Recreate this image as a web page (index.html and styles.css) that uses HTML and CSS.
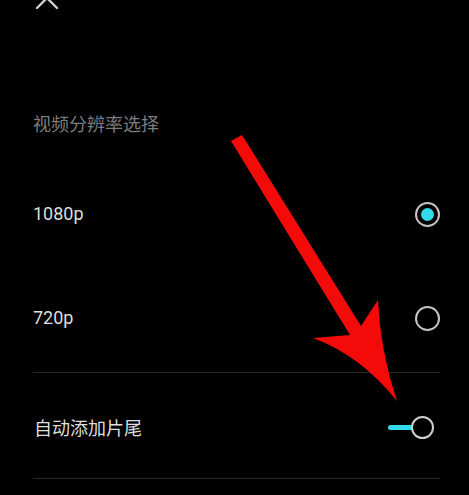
FILE: index.html
```html
<!DOCTYPE html>
<html lang="zh-CN">
<head>
<meta charset="utf-8">
<title>视频分辨率选择</title>
<link rel="stylesheet" href="styles.css">
</head>
<body>
<div class="screen">
  <div class="topbar">
    <svg class="close" width="24" height="10" viewBox="0 14 24 10" aria-label="关闭">
      <path d="M2 2 L22 22 M22 2 L2 22" stroke="#cfcfcf" stroke-width="2.4" stroke-linecap="round" fill="none"/>
    </svg>
  </div>

  <section class="group">
    <div class="group-title">视频分辨率选择</div>
    <div class="option-row">
      <span class="option-label">1080p</span>
      <span class="radio radio-on"><span class="radio-dot"></span></span>
    </div>
    <div class="option-row">
      <span class="option-label">720p</span>
      <span class="radio"></span>
    </div>
  </section>

  <div class="divider"></div>

  <div class="option-row toggle-row">
    <span class="option-label cjk">自动添加片尾</span>
    <span class="toggle"><span class="toggle-track"></span><span class="toggle-knob"></span></span>
  </div>

  <div class="divider"></div>

  <svg class="annotation" width="469" height="495" viewBox="0 0 469 495">
    <path d="M231 141 L242 135 L361 326 L378 300 Q380 350 397 401 Q360 355 313 338 L350 335 Z" fill="#f50a0a"/>
  </svg>
</div>
</body>
</html>
```

FILE: styles.css
```css
html, body {
  margin: 0;
  padding: 0;
  background: #000;
}

.screen {
  position: relative;
  width: 469px;
  height: 495px;
  overflow: hidden;
  background: #000;
  font-family: Roboto, "Noto Sans CJK SC", sans-serif;
}

.topbar {
  height: 10px;
  padding-left: 35px;
}

.close {
  display: block;
}

.group {
  padding: 0 29px 0 33px;
}

.group-title {
  margin-top: 101px;
  height: 24px;
  line-height: 24px;
  font-size: 18px;
  color: #7c7c7c;
  font-family: "Noto Sans CJK SC", sans-serif;
  margin-bottom: 27px;
}

.option-row {
  height: 104px;
  display: flex;
  align-items: center;
  justify-content: space-between;
}

.option-label {
  font-size: 18px;
  color: #dedede;
  line-height: 24px;
}

.cjk {
  font-family: "Noto Sans CJK SC", sans-serif;
}

.radio {
  box-sizing: border-box;
  width: 25px;
  height: 25px;
  border: 2px solid #c6c6c6;
  border-radius: 50%;
  display: flex;
  align-items: center;
  justify-content: center;
}

.radio-dot {
  width: 13px;
  height: 13px;
  border-radius: 50%;
  background: #33dbea;
}

.divider {
  margin: 2px 29px 0 33px;
  height: 1px;
  background: #272727;
}

.toggle-row {
  box-sizing: border-box;
  height: 105px;
  padding: 3px 35px 0 34px;
}

.toggle {
  position: relative;
  width: 46px;
  height: 23px;
  display: flex;
  align-items: center;
}

.toggle-track {
  width: 30px;
  height: 5px;
  border-radius: 3px;
  background: #33dbea;
}

.toggle-knob {
  position: absolute;
  right: 0;
  top: 0;
  box-sizing: border-box;
  width: 23px;
  height: 23px;
  border-radius: 50%;
  border: 2px solid #cfcfcf;
  background: #000;
}

.toggle-row + .divider {
  margin-top: 0;
}

.annotation {
  position: absolute;
  left: 0;
  top: 0;
  pointer-events: none;
}
```
